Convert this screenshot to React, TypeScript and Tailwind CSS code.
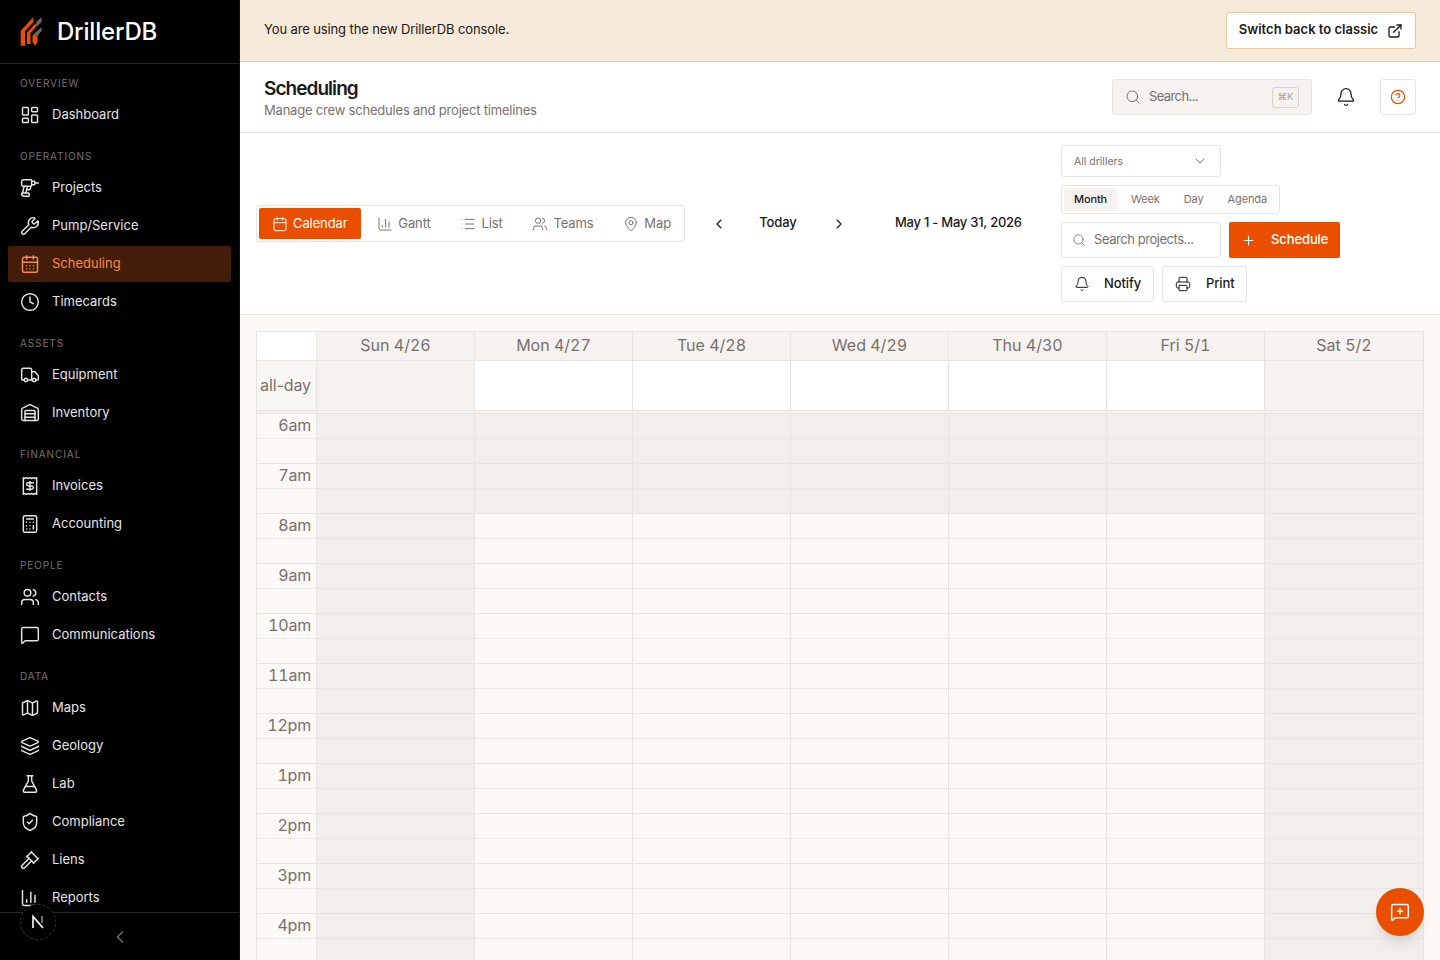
import React from "react";
import {
  LayoutDashboard, Drill, Wrench, CalendarDays, Clock, Truck, Warehouse, Receipt, Calculator, Users,
  MessageSquare, Map as MapIcon, Layers, FlaskConical, ShieldCheck, Gavel, ChartColumn, ChevronLeft,
  ChevronRight, ChevronDown, ExternalLink, Search, Bell, CircleHelp, Calendar, List, MapPin, Plus, Printer,
  MessageSquarePlus,
} from "lucide-react";

const sections = [
  { label: "OVERVIEW", items: [{ name: "Dashboard", icon: LayoutDashboard }] },
  {
    label: "OPERATIONS",
    items: [
      { name: "Projects", icon: Drill },
      { name: "Pump/Service", icon: Wrench },
      { name: "Scheduling", icon: CalendarDays, active: true },
      { name: "Timecards", icon: Clock },
    ],
  },
  { label: "ASSETS", items: [{ name: "Equipment", icon: Truck }, { name: "Inventory", icon: Warehouse }] },
  { label: "FINANCIAL", items: [{ name: "Invoices", icon: Receipt }, { name: "Accounting", icon: Calculator }] },
  { label: "PEOPLE", items: [{ name: "Contacts", icon: Users }, { name: "Communications", icon: MessageSquare }] },
  {
    label: "DATA",
    items: [
      { name: "Maps", icon: MapIcon },
      { name: "Geology", icon: Layers },
      { name: "Lab", icon: FlaskConical },
      { name: "Compliance", icon: ShieldCheck },
      { name: "Liens", icon: Gavel },
      { name: "Reports", icon: ChartColumn },
    ],
  },
];

const days = ["Sun 4/26", "Mon 4/27", "Tue 4/28", "Wed 4/29", "Thu 4/30", "Fri 5/1", "Sat 5/2"];
const hours = ["6am", "7am", "8am", "9am", "10am", "11am", "12pm", "1pm", "2pm", "3pm", "4pm"];
const gridCols = "grid grid-cols-[60px_repeat(7,158px)]";

function Logo() {
  return (
    <svg width="24" height="32" viewBox="20 17 24 32" className="shrink-0">
      <polygon points="20.7,31.7 33.3,18.3 33.3,23.3 25,32.3 25,46.7 20.7,46.7" fill="#ea4f00" />
      <polygon points="27,33.5 36.5,23.5 36.5,27.5 30.5,34 30.5,45 27,45" fill="#ea4f00" />
      <polygon points="32.5,36.5 37.5,33 37.5,43 35,46.7 32.5,43" fill="#ea4f00" />
      <polygon points="36.5,22.5 41.7,18.3 41.7,23 36.5,28" fill="#6b6560" />
      <polygon points="33.5,35 41.7,28.3 41.7,32 36,38" fill="#6b6560" />
    </svg>
  );
}

function Sidebar() {
  return (
    <aside className="relative w-[240px] shrink-0 h-screen bg-black border-r border-[#111] flex flex-col font-['Inter',sans-serif]">
      <div className="h-[64px] shrink-0 border-b border-[#262626] flex items-center pl-5 gap-[13px]">
        <Logo />
        <span className="pt-[1px] text-[24px] leading-none font-medium text-white tracking-[-0.2px] font-['Inter',sans-serif]">DrillerDB</span>
      </div>
      <nav className="flex-1 overflow-hidden pt-[11px] px-2">
        {sections.map((s) => (
          <div key={s.label} className="mb-[15px]">
            <div className="h-4 mb-[6px] px-3 text-[10px] leading-4 tracking-[0.9px] text-[#78716c]">{s.label}</div>
            <div className="flex flex-col gap-[2px]">
              {s.items.map((it: any) => {
                const Icon = it.icon;
                return (
                  <div
                    key={it.name}
                    className={`h-9 rounded-[2px] flex items-center gap-[12px] px-3 text-[13px] ${
                      it.active ? "bg-[#431d07] text-[#fb8a47]" : "text-[#e7e5e4]"
                    }`}
                  >
                    <Icon size={20} strokeWidth={1.75} className="shrink-0" />
                    <span>{it.name}</span>
                  </div>
                );
              })}
            </div>
          </div>
        ))}
      </nav>
      <div className="h-[48px] shrink-0 border-t border-[#262626] bg-black flex items-center justify-center">
        <ChevronLeft size={20} strokeWidth={1.5} className="text-[#78716c]" />
      </div>
      <div className="absolute left-5 top-[904px] w-9 h-9 rounded-full bg-black border border-[#333] border-dashed flex items-center justify-center">
        <svg width="16" height="16" viewBox="0 0 16 16" fill="none">
          <path d="M3 14V2.5L13 14" stroke="#fff" strokeWidth="1.6" />
          <path d="M12 2v7" stroke="#bbb" strokeWidth="1.2" />
        </svg>
      </div>
    </aside>
  );
}

function Banner() {
  return (
    <div className="h-[62px] shrink-0 bg-[#f5e9da] border-b border-[#e5cfa9] flex items-center justify-between pl-6 pr-6">
      <span className="text-[13px] tracking-[-0.12px] text-[#1c1917] pb-[1px]">You are using the new DrillerDB console.</span>
      <button className="h-[37px] w-[190px] bg-white border border-[#e5c9a0] rounded-[3px] flex items-center justify-center gap-[9px] text-[13px] font-semibold text-[#1c1917]">
        <span className="pb-[1px]">Switch back to classic</span>
        <ExternalLink size={16} strokeWidth={2} />
      </button>
    </div>
  );
}

function Header() {
  return (
    <div className="h-[71px] shrink-0 bg-white border-b border-[#e7e5e4] flex items-center justify-between px-6">
      <div className="flex flex-col">
        <h1 className="pt-[1px] text-[19px] leading-[25px] font-semibold text-[#1c1917] tracking-[-0.95px]">Scheduling</h1>
        <p className="text-[13px] leading-[18px] tracking-[-0.2px] text-[#78716c]">Manage crew schedules and project timelines</p>
      </div>
      <div className="flex items-center">
        <div className="w-[200px] h-9 bg-[#f5f2ef] border border-[#e7e5e4] rounded-[3px] flex items-center pl-3 pr-3 text-[#78716c]">
          <Search size={16} strokeWidth={1.5} className="shrink-0" />
          <span className="ml-[8px] text-[13px] tracking-[-0.6px] flex-1">Search...</span>
          <span className="w-[27px] h-[21px] border border-[#d6d3d1] rounded-[3px] text-[9.5px] text-[#a8a29e] flex items-center justify-center">⌘K</span>
        </div>
        <div className="w-9 h-9 ml-4 flex items-center justify-center text-[#1c1917]">
          <Bell size={20} strokeWidth={1.5} />
        </div>
        <div className="w-9 h-9 ml-4 border border-[#e7e5e4] rounded-[3px] flex items-center justify-center text-[#ea4f00]">
          <CircleHelp size={16} strokeWidth={1.75} />
        </div>
      </div>
    </div>
  );
}

function Toolbar() {
  const tabs = [
    { n: "Gantt", i: ChartColumn },
    { n: "List", i: List },
    { n: "Teams", i: Users },
    { n: "Map", i: MapPin },
  ];
  return (
    <div className="h-[182px] shrink-0 bg-white border-b border-[#e7e5e4] flex items-center px-4">
      <div className="h-[37px] w-[429px] border border-[#e7e5e4] rounded-[3px] p-[2px] flex gap-[3.75px] tracking-[-0.1px]">
        <button className="h-[31px] px-[13px] bg-[#ea4f00] text-white rounded-[2px] flex items-center gap-[5px] text-[13px]">
          <Calendar size={16} strokeWidth={1.5} />
          Calendar
        </button>
        {tabs.map((t) => (
          <button key={t.n} className="h-[31px] px-[13px] text-[#78716c] flex items-center gap-[5px] text-[13px]">
            <t.i size={16} strokeWidth={1.5} />
            {t.n}
          </button>
        ))}
      </div>
      <button className="w-9 h-9 ml-4 flex items-center justify-center text-[#1c1917]">
        <ChevronLeft size={16} strokeWidth={1.75} />
      </button>
      <button className="w-[66px] h-9 ml-2 text-[13px] font-medium tracking-[-0.1px] text-[#1c1917] pb-[1px]">Today</button>
      <button className="w-9 h-9 ml-[10px] flex items-center justify-center text-[#1c1917]">
        <ChevronRight size={16} strokeWidth={1.75} />
      </button>
      <span className="ml-[38px] text-[13px] font-medium tracking-[-0.25px] text-[#1c1917] whitespace-nowrap pb-[1px]">May 1 - May 31, 2026</span>
      <div className="ml-auto w-[363px] shrink-0 flex flex-wrap gap-2">
        <div className="w-40 h-8 border border-[#e7e5e4] rounded-[3px] flex items-center justify-between pl-3 pr-3 text-[#78716c] text-[10.5px]">
          <span className="pt-[1px]">All drillers</span>
          <ChevronDown size={16} strokeWidth={1.5} />
        </div>
        <div className="h-[29px] border border-[#e7e5e4] rounded-[3px] p-[2px] flex gap-1 text-[11px] tracking-[-0.12px] text-[#78716c]">
          <span className="h-[23px] px-[10px] flex items-center rounded-[2px] bg-[#f5f2ef] text-[#1c1917] font-medium">Month</span>
          <span className="h-[23px] px-[10px] flex items-center">Week</span>
          <span className="h-[23px] px-[10px] flex items-center">Day</span>
          <span className="h-[23px] px-[10px] flex items-center">Agenda</span>
        </div>
        <div className="w-40 h-9 border border-[#e7e5e4] rounded-[3px] flex items-center pl-[10px] text-[#78716c] text-[13px]">
          <Search size={14} strokeWidth={1.5} className="shrink-0" />
          <span className="ml-[8px] tracking-[-0.45px]">Search projects...</span>
        </div>
        <button className="w-[111px] h-9 bg-[#ea4f00] text-white rounded-[2px] flex items-center pl-[12px] text-[13px] font-medium tracking-[-0.1px]">
          <Plus size={15} strokeWidth={1.75} />
          <span className="ml-[15px]">Schedule</span>
        </button>
        <button className="w-[93px] h-9 border border-[#e7e5e4] rounded-[2px] flex items-center pl-[12px] text-[13px] font-medium tracking-[-0.1px] text-[#1c1917]">
          <Bell size={16} strokeWidth={1.5} />
          <span className="ml-[14px]">Notify</span>
        </button>
        <button className="w-[85px] h-9 border border-[#e7e5e4] rounded-[2px] flex items-center pl-[12px] text-[13px] font-medium tracking-[-0.1px] text-[#1c1917]">
          <Printer size={16} strokeWidth={1.5} />
          <span className="ml-[15px]">Print</span>
        </button>
      </div>
    </div>
  );
}

function isWeekend(d: number) {
  return d === 0 || d === 6;
}

function CalendarGrid() {
  const rows: React.ReactNode[] = [];
  hours.forEach((h, hi) => {
    [0, 1].forEach((half) => {
      rows.push(
        <div key={h + half} className={gridCols}>
          <div
            className={`h-[25px] border-r border-[#e7e5e4] border-b ${
              half === 0 ? "border-b-[#e0dedc] border-dotted" : "border-b-[#e7e5e4]"
            } pr-[5px] text-right text-[16px] leading-[23px] tabular-nums tracking-[-0.2px] text-[#78716c]`}
            style={{ borderRightStyle: "solid" }}
          >
            {half === 0 ? h : ""}
          </div>
          {days.map((d, i) => {
            const gray = isWeekend(i) || hi < 2;
            return (
              <div
                key={d}
                className={`h-[25px] border-b ${half === 0 ? "border-dotted border-b-[#e0dedc]" : "border-b-[#e7e5e4]"} ${
                  i < 6 ? "border-r border-r-[#e7e5e4]" : ""
                } ${gray ? "bg-[#f1eeeb]" : ""}`}
                style={{ borderRightStyle: i < 6 ? "solid" : undefined }}
              />
            );
          })}
        </div>
      );
    });
  });

  return (
    <div className="flex-1 overflow-hidden bg-[#fdf9f6] pt-4 px-4">
      <div className="border-l border-t border-r border-[#e7e5e4] w-[1168px]">
        <div className={gridCols}>
          <div className="h-[29px] bg-white border-r border-b border-[#e7e5e4]" />
          {days.map((d, i) => (
            <div
              key={d}
              className={`h-[29px] bg-[#f5f2ef] border-b border-[#e7e5e4] ${i < 6 ? "border-r" : ""} flex items-center justify-center pb-[2px] text-[16px] tabular-nums text-[#78716c]`}
            >
              {d}
            </div>
          ))}
        </div>
        <div className={gridCols}>
          <div className="h-[50px] border-r border-b border-[#e7e5e4] bg-[#f9f7f4] text-right pr-[5px] text-[16px] leading-[48px] tracking-[-0.1px] text-[#78716c]">all-day</div>
          {days.map((d, i) => (
            <div
              key={d}
              className={`h-[50px] border-b border-[#e7e5e4] ${i < 6 ? "border-r" : ""} ${isWeekend(i) ? "bg-[#f5f2ef]" : "bg-white"}`}
            />
          ))}
        </div>
        <div className="h-[3px] border-b border-[#e7e5e4] bg-[#f5f2ef]" />
        {rows}
      </div>
    </div>
  );
}

export default function App() {
  return (
    <div className="relative flex w-[1440px] h-screen overflow-hidden bg-white font-['Inter',sans-serif]">
      <Sidebar />
      <main className="flex-1 min-w-0 flex flex-col h-screen overflow-hidden">
        <Banner />
        <Header />
        <Toolbar />
        <CalendarGrid />
      </main>
      <button className="absolute left-[1376px] top-[888px] w-12 h-12 rounded-full bg-[#ea4f00] text-white flex items-center justify-center shadow-lg">
        <MessageSquarePlus size={20} strokeWidth={1.75} />
      </button>
    </div>
  );
}
